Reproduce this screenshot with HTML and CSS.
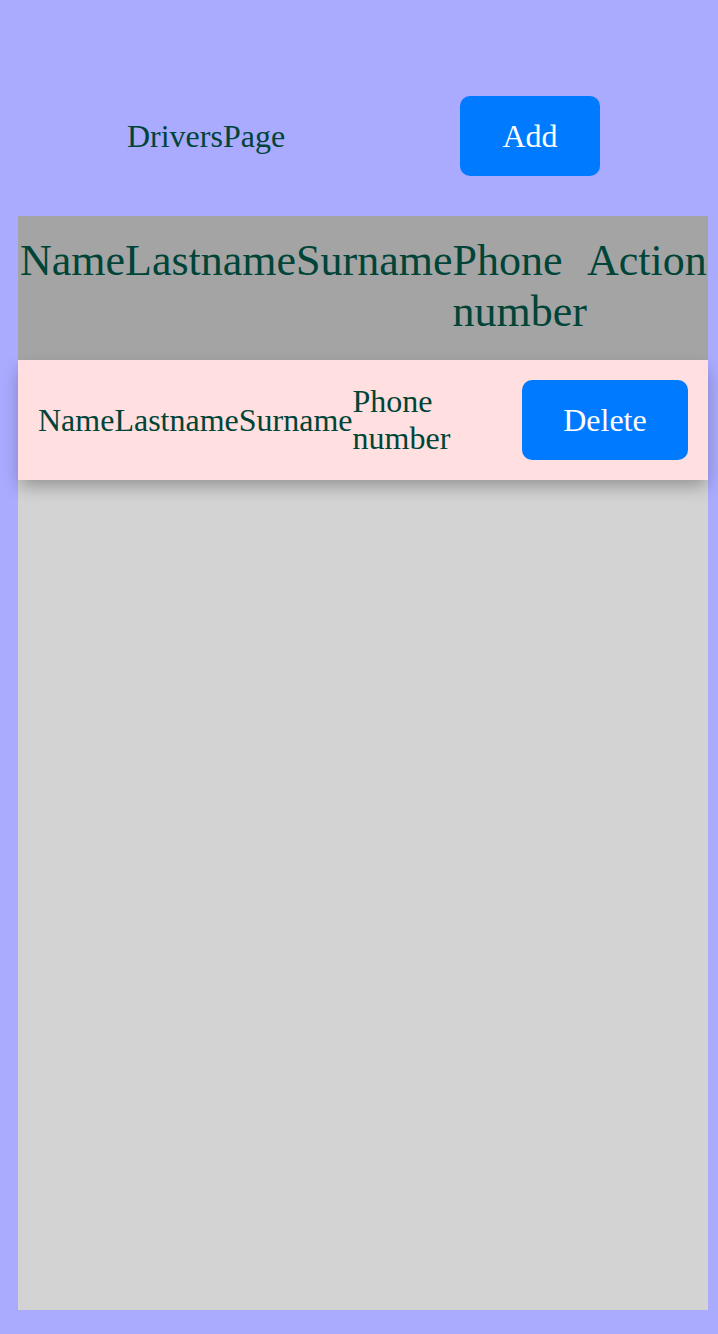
FILE: index.html
```html
<!DOCTYPE html>
<html>
<head>
<meta charset="utf-8">
<link rel="stylesheet" href="styles.css">
</head>
<body>
<header class="top">
  <div class="title">DriversPage</div>
  <button class="btn btn-add">Add</button>
</header>
<main class="panel">
  <div class="thead">
    <div class="cell">Name</div>
    <div class="cell">Lastname</div>
    <div class="cell">Surname</div>
    <div class="cell">Phone number</div>
    <div class="cell">Action</div>
  </div>
  <div class="row">
    <div class="cell">Name</div>
    <div class="cell">Lastname</div>
    <div class="cell">Surname</div>
    <div class="cell">Phone number</div>
    <button class="btn btn-del">Delete</button>
  </div>
</main>
</body>
</html>
```

FILE: styles.css
```css
html, body {
  margin: 0;
  padding: 0;
}
body {
  background: #aaaaff;
  font-family: "Liberation Serif", "Times New Roman", serif;
  color: #004438;
}
.top {
  display: grid;
  grid-template-columns: 1fr 1fr;
  justify-items: center;
  align-items: center;
  padding: 96px 26px 40px 44px;
}
.title {
  font-size: 32px;
}
.btn {
  background: #007bff;
  color: #ffffff;
  border: none;
  border-radius: 10px;
  font-family: "Liberation Serif", "Times New Roman", serif;
  font-size: 32px;
  height: 80px;
  padding: 0 42px;
  margin: 0;
}
.btn-add {
  padding: 0 42.5px;
}
.btn-del {
  padding: 0 41.3px;
}
.panel {
  margin: 0 10px 0 18px;
  height: 1094px;
  background: #d3d3d3;
}
.thead {
  display: flex;
  align-items: flex-start;
  box-sizing: border-box;
  height: 144px;
  padding: 19px 2px 0;
  background: #a4a4a4;
  font-size: 44px;
}
.row {
  display: flex;
  align-items: center;
  padding: 20px;
  background: #ffdfdf;
  font-size: 32px;
  box-shadow: 0 8px 16px -2px rgba(0, 0, 0, 0.3);
  position: relative;
}
```
